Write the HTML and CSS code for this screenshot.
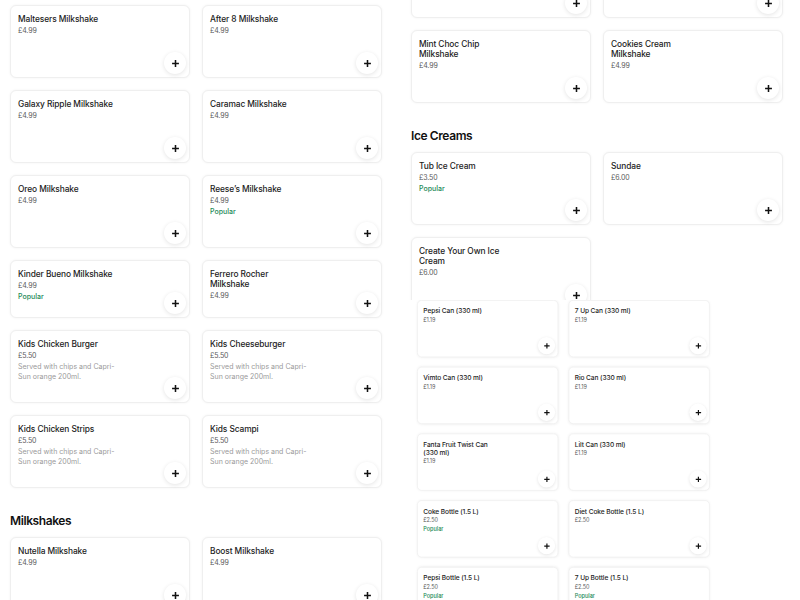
FILE: index.html
```html
<!DOCTYPE html>
<html lang="en">
<head>
<meta charset="utf-8">
<title>Menu</title>
<link rel="stylesheet" href="styles.css">
</head>
<body>
<div class="page">
  <div class="col col-left">
    <div class="grid">
      <div class="card"><div class="info"><div class="name">Maltesers Milkshake</div><div class="price">£4.99</div></div><span class="add"><svg viewBox="0 0 10 10"><path d="M5 1.2v7.6M1.2 5h7.6"/></svg></span></div>
      <div class="card"><div class="info"><div class="name">After 8 Milkshake</div><div class="price">£4.99</div></div><span class="add"><svg viewBox="0 0 10 10"><path d="M5 1.2v7.6M1.2 5h7.6"/></svg></span></div>
      <div class="card"><div class="info"><div class="name">Galaxy Ripple Milkshake</div><div class="price">£4.99</div></div><span class="add"><svg viewBox="0 0 10 10"><path d="M5 1.2v7.6M1.2 5h7.6"/></svg></span></div>
      <div class="card"><div class="info"><div class="name">Caramac Milkshake</div><div class="price">£4.99</div></div><span class="add"><svg viewBox="0 0 10 10"><path d="M5 1.2v7.6M1.2 5h7.6"/></svg></span></div>
      <div class="card"><div class="info"><div class="name">Oreo Milkshake</div><div class="price">£4.99</div></div><span class="add"><svg viewBox="0 0 10 10"><path d="M5 1.2v7.6M1.2 5h7.6"/></svg></span></div>
      <div class="card"><div class="info"><div class="name">Reese’s Milkshake</div><div class="price">£4.99</div><div class="popular">Popular</div></div><span class="add"><svg viewBox="0 0 10 10"><path d="M5 1.2v7.6M1.2 5h7.6"/></svg></span></div>
      <div class="card card-short"><div class="info"><div class="name">Kinder Bueno Milkshake</div><div class="price">£4.99</div><div class="popular">Popular</div></div><span class="add"><svg viewBox="0 0 10 10"><path d="M5 1.2v7.6M1.2 5h7.6"/></svg></span></div>
      <div class="card card-short"><div class="info"><div class="name">Ferrero Rocher Milkshake</div><div class="price">£4.99</div></div><span class="add"><svg viewBox="0 0 10 10"><path d="M5 1.2v7.6M1.2 5h7.6"/></svg></span></div>
      <div class="card"><div class="info"><div class="name">Kids Chicken Burger</div><div class="price">£5.50</div><div class="desc">Served with chips and Capri-Sun orange 200ml.</div></div><span class="add"><svg viewBox="0 0 10 10"><path d="M5 1.2v7.6M1.2 5h7.6"/></svg></span></div>
      <div class="card"><div class="info"><div class="name">Kids Cheeseburger</div><div class="price">£5.50</div><div class="desc">Served with chips and Capri-Sun orange 200ml.</div></div><span class="add"><svg viewBox="0 0 10 10"><path d="M5 1.2v7.6M1.2 5h7.6"/></svg></span></div>
      <div class="card"><div class="info"><div class="name">Kids Chicken Strips</div><div class="price">£5.50</div><div class="desc">Served with chips and Capri-Sun orange 200ml.</div></div><span class="add"><svg viewBox="0 0 10 10"><path d="M5 1.2v7.6M1.2 5h7.6"/></svg></span></div>
      <div class="card"><div class="info"><div class="name">Kids Scampi</div><div class="price">£5.50</div><div class="desc">Served with chips and Capri-Sun orange 200ml.</div></div><span class="add"><svg viewBox="0 0 10 10"><path d="M5 1.2v7.6M1.2 5h7.6"/></svg></span></div>
    </div>
    <h2 class="section-title">Milkshakes</h2>
    <div class="grid">
      <div class="card"><div class="info"><div class="name">Nutella Milkshake</div><div class="price">£4.99</div></div><span class="add"><svg viewBox="0 0 10 10"><path d="M5 1.2v7.6M1.2 5h7.6"/></svg></span></div>
      <div class="card"><div class="info"><div class="name">Boost Milkshake</div><div class="price">£4.99</div></div><span class="add"><svg viewBox="0 0 10 10"><path d="M5 1.2v7.6M1.2 5h7.6"/></svg></span></div>
    </div>
  </div>

  <div class="col col-right">
    <div class="grid">
      <div class="card"><div class="info"></div><span class="add"><svg viewBox="0 0 10 10"><path d="M5 1.2v7.6M1.2 5h7.6"/></svg></span></div>
      <div class="card"><div class="info"></div><span class="add"><svg viewBox="0 0 10 10"><path d="M5 1.2v7.6M1.2 5h7.6"/></svg></span></div>
      <div class="card"><div class="info"><div class="name">Mint Choc Chip Milkshake</div><div class="price">£4.99</div></div><span class="add"><svg viewBox="0 0 10 10"><path d="M5 1.2v7.6M1.2 5h7.6"/></svg></span></div>
      <div class="card"><div class="info"><div class="name">Cookies Cream Milkshake</div><div class="price">£4.99</div></div><span class="add"><svg viewBox="0 0 10 10"><path d="M5 1.2v7.6M1.2 5h7.6"/></svg></span></div>
    </div>
    <h2 class="section-title">Ice Creams</h2>
    <div class="grid">
      <div class="card"><div class="info"><div class="name">Tub Ice Cream</div><div class="price">£3.50</div><div class="popular">Popular</div></div><span class="add"><svg viewBox="0 0 10 10"><path d="M5 1.2v7.6M1.2 5h7.6"/></svg></span></div>
      <div class="card"><div class="info"><div class="name">Sundae</div><div class="price">£6.00</div></div><span class="add"><svg viewBox="0 0 10 10"><path d="M5 1.2v7.6M1.2 5h7.6"/></svg></span></div>
      <div class="card"><div class="info"><div class="name">Create Your Own Ice Cream</div><div class="price">£6.00</div></div><span class="add"><svg viewBox="0 0 10 10"><path d="M5 1.2v7.6M1.2 5h7.6"/></svg></span></div>
    </div>
  </div>
</div>

<div class="drinks-panel">
  <div class="grid drinks-grid">
    <div class="card"><div class="info"><div class="name">Pepsi Can (330 ml)</div><div class="price">£1.19</div></div><span class="add"><svg viewBox="0 0 10 10"><path d="M5 1.2v7.6M1.2 5h7.6"/></svg></span></div>
    <div class="card"><div class="info"><div class="name">7 Up Can (330 ml)</div><div class="price">£1.19</div></div><span class="add"><svg viewBox="0 0 10 10"><path d="M5 1.2v7.6M1.2 5h7.6"/></svg></span></div>
    <div class="card"><div class="info"><div class="name">Vimto Can (330 ml)</div><div class="price">£1.19</div></div><span class="add"><svg viewBox="0 0 10 10"><path d="M5 1.2v7.6M1.2 5h7.6"/></svg></span></div>
    <div class="card"><div class="info"><div class="name">Rio Can (330 ml)</div><div class="price">£1.19</div></div><span class="add"><svg viewBox="0 0 10 10"><path d="M5 1.2v7.6M1.2 5h7.6"/></svg></span></div>
    <div class="card"><div class="info"><div class="name">Fanta Fruit Twist Can (330 ml)</div><div class="price">£1.19</div></div><span class="add"><svg viewBox="0 0 10 10"><path d="M5 1.2v7.6M1.2 5h7.6"/></svg></span></div>
    <div class="card"><div class="info"><div class="name">Lilt Can (330 ml)</div><div class="price">£1.19</div></div><span class="add"><svg viewBox="0 0 10 10"><path d="M5 1.2v7.6M1.2 5h7.6"/></svg></span></div>
    <div class="card"><div class="info"><div class="name">Coke Bottle (1.5 L)</div><div class="price">£2.50</div><div class="popular">Popular</div></div><span class="add"><svg viewBox="0 0 10 10"><path d="M5 1.2v7.6M1.2 5h7.6"/></svg></span></div>
    <div class="card"><div class="info"><div class="name">Diet Coke Bottle (1.5 L)</div><div class="price">£2.50</div></div><span class="add"><svg viewBox="0 0 10 10"><path d="M5 1.2v7.6M1.2 5h7.6"/></svg></span></div>
    <div class="card"><div class="info"><div class="name">Pepsi Bottle (1.5 L)</div><div class="price">£2.50</div><div class="popular">Popular</div></div><span class="add"><svg viewBox="0 0 10 10"><path d="M5 1.2v7.6M1.2 5h7.6"/></svg></span></div>
    <div class="card"><div class="info"><div class="name">7 Up Bottle (1.5 L)</div><div class="price">£2.50</div><div class="popular">Popular</div></div><span class="add"><svg viewBox="0 0 10 10"><path d="M5 1.2v7.6M1.2 5h7.6"/></svg></span></div>
  </div>
</div>
</body>
</html>
```

FILE: styles.css
```css
html, body {
  margin: 0;
  padding: 0;
  width: 800px;
  height: 600px;
  overflow: hidden;
  background: #ffffff;
  font-family: Inter, "Noto Sans", "Liberation Sans", sans-serif;
  color: #1f1f1f;
}

.page {
  display: grid;
  grid-template-columns: 372px 372px;
  column-gap: 29px;
  padding-left: 10px;
}

.col-left {
  padding-top: 5px;
}

.col-right {
  margin-top: -55px;
}

.grid {
  display: grid;
  grid-template-columns: 180px 180px;
  column-gap: 12px;
  row-gap: 12px;
}

.card {
  box-sizing: border-box;
  height: 73px;
  border: 1px solid #efefef;
  border-radius: 6px;
  background: #fff;
  box-shadow: 0 0 3px rgba(0, 0, 0, 0.05);
  display: flex;
  justify-content: space-between;
  padding: 8px 3px 3px 7px;
}

.card-short {
  height: 58px;
}

.info {
  display: flex;
  flex-direction: column;
  width: 110px;
}

.name {
  max-width: 96px;
  font-size: 8.4px;
  line-height: 10px;
  font-weight: 500;
  letter-spacing: -0.1px;
  color: #1c1c1c;
}

.price {
  margin-top: 2px;
  font-size: 7px;
  line-height: 10px;
  color: #5b5b5b;
  letter-spacing: -0.1px;
}

.popular {
  margin-top: 1px;
  font-size: 7px;
  line-height: 10px;
  font-weight: 500;
  color: #1b8a56;
}

.desc {
  margin-top: 1px;
  font-size: 7px;
  line-height: 10px;
  color: #9a9a9a;
  max-width: 98px;
}

.add {
  align-self: flex-end;
  flex: none;
  width: 22px;
  height: 22px;
  border-radius: 50%;
  background: #fff;
  box-shadow: 0 1px 4px rgba(0, 0, 0, 0.11);
  display: flex;
  align-items: center;
  justify-content: center;
}

.add svg {
  width: 9px;
  height: 9px;
  fill: none;
  stroke: #111;
  stroke-width: 1.7;
}

.section-title {
  margin: 24px 0 8px;
  font-size: 12px;
  line-height: 17px;
  font-weight: 600;
  letter-spacing: -0.4px;
  color: #111;
}

.drinks-panel {
  position: absolute;
  left: 400px;
  top: 300px;
  width: 400px;
  height: 300px;
  background: #fff;
  overflow: hidden;
}

.drinks-grid {
  margin-left: 17px;
  column-gap: 13px;
  transform: scale(0.785);
  transform-origin: 0 0;
}
```
